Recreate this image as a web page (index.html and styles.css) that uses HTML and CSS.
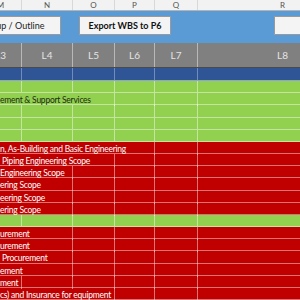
FILE: index.html
```html
<!DOCTYPE html>
<html>
<head>
    <meta charset="utf8"/>
    <link rel="stylesheet" href="styles.css">
</head>
<body>
<div class="sheet">
    <!-- column letters -->
    <div class="row letters">
        <div class="cell">M</div>
        <div class="cell">N</div>
        <div class="cell">O</div>
        <div class="cell">P</div>
        <div class="cell">Q</div>
        <div class="cell">R</div>
    </div>

    <!-- macro buttons -->
    <div class="toolbar">
        <button type="button" class="btn btn-outline">Group / Outline</button>
        <button type="button" class="btn btn-export">Export WBS to P6</button>
        <button type="button" class="btn btn-more"></button>
    </div>

    <div class="row levels">
        <div class="cell">L3</div>
        <div class="cell">L4</div>
        <div class="cell">L5</div>
        <div class="cell">L6</div>
        <div class="cell">L7</div>
        <div class="cell">L8</div>
    </div>

    <div class="row blue">
        <div class="cell"></div><div class="cell"></div><div class="cell"></div>
        <div class="cell"></div><div class="cell"></div><div class="cell"></div>
    </div>

    <div class="row green">
        <div class="cell"></div><div class="cell"></div><div class="cell"></div>
        <div class="cell"></div><div class="cell"></div><div class="cell"></div>
    </div>
    <div class="row green">
        <div class="cell txt span3">ement &amp; Support Services</div>
        <div class="cell"></div><div class="cell"></div><div class="cell"></div>
    </div>
    <div class="row green">
        <div class="cell"></div><div class="cell"></div><div class="cell"></div>
        <div class="cell"></div><div class="cell"></div><div class="cell"></div>
    </div>
    <div class="row green">
        <div class="cell"></div><div class="cell"></div><div class="cell"></div>
        <div class="cell"></div><div class="cell"></div><div class="cell"></div>
    </div>
    <div class="row green">
        <div class="cell"></div><div class="cell"></div><div class="cell"></div>
        <div class="cell"></div><div class="cell"></div><div class="cell"></div>
    </div>

    <div class="row red">
        <div class="cell txt span4">n, As-Building and Basic Engineering</div>
        <div class="cell"></div><div class="cell"></div>
    </div>
    <div class="row red">
        <div class="cell txt span3 indent">Piping Engineering Scope</div>
        <div class="cell"></div><div class="cell"></div><div class="cell"></div>
    </div>
    <div class="row red">
        <div class="cell txt span2">Engineering Scope</div>
        <div class="cell"></div><div class="cell"></div><div class="cell"></div><div class="cell"></div>
    </div>
    <div class="row red">
        <div class="cell txt span2">ering Scope</div>
        <div class="cell"></div><div class="cell"></div><div class="cell"></div><div class="cell"></div>
    </div>
    <div class="row red">
        <div class="cell txt span2">eering Scope</div>
        <div class="cell"></div><div class="cell"></div><div class="cell"></div><div class="cell"></div>
    </div>
    <div class="row red">
        <div class="cell txt span2">ering Scope</div>
        <div class="cell"></div><div class="cell"></div><div class="cell"></div><div class="cell"></div>
    </div>

    <div class="row green">
        <div class="cell"></div><div class="cell"></div><div class="cell"></div>
        <div class="cell"></div><div class="cell"></div><div class="cell"></div>
    </div>

    <div class="row red">
        <div class="cell txt span2">urement</div>
        <div class="cell"></div><div class="cell"></div><div class="cell"></div><div class="cell"></div>
    </div>
    <div class="row red">
        <div class="cell txt span2">urement</div>
        <div class="cell"></div><div class="cell"></div><div class="cell"></div><div class="cell"></div>
    </div>
    <div class="row red">
        <div class="cell txt span2 indent">Procurement</div>
        <div class="cell"></div><div class="cell"></div><div class="cell"></div><div class="cell"></div>
    </div>
    <div class="row red">
        <div class="cell txt span2">ement</div>
        <div class="cell"></div><div class="cell"></div><div class="cell"></div><div class="cell"></div>
    </div>
    <div class="row red">
        <div class="cell txt">ment</div>
        <div class="cell"></div><div class="cell"></div><div class="cell"></div><div class="cell"></div><div class="cell"></div>
    </div>
    <div class="row red">
        <div class="cell txt span3">cs) and Insurance for equipment</div>
        <div class="cell"></div><div class="cell"></div><div class="cell"></div>
    </div>
</div>
</body>
</html>
```

FILE: styles.css
```css
body {
    margin: 0;
    overflow: hidden;
    background: #fff;
    font-family: Lato, "Liberation Sans", sans-serif;
}

/* sheet starts mid column M */
.sheet {
    margin-left: -20px;
    width: 388px;
}

.row {
    display: grid;
    grid-template-columns: 42px 51px 42px 40px 43px 170px;
    box-sizing: border-box;
}

.cell {
    box-sizing: border-box;
    border-right: 1px solid rgba(255, 255, 255, 0.45);
    white-space: nowrap;
}

.span2 { grid-column: span 2; }
.span3 { grid-column: span 3; }
.span4 { grid-column: span 4; }

/* column letters */
.letters {
    height: 11px;
    background: #f2f2f2;
    border-bottom: 1px solid #b4b4b4;
}

.letters .cell {
    border-right: 1px solid #d8d8d8;
    color: #555;
    font-size: 8px;
    line-height: 10px;
    text-align: center;
}

/* button bar */
.toolbar {
    height: 32px;
    box-sizing: border-box;
    background: #5b9bd5;
    display: flex;
    align-items: flex-start;
    padding-top: 5px;
}

.btn {
    height: 19px;
    background: #f4f4f4;
    border: 1px solid #9a9a9a;
    border-radius: 1px;
    padding: 0;
    font-family: Lato, "Liberation Sans", sans-serif;
    font-size: 9px;
    color: #222;
    flex: none;
}

.btn-outline {
    width: 96px;
    margin-left: -15px;
}

.btn-export {
    width: 92px;
    margin-left: 18px;
    font-weight: bold;
    color: #111;
}

.btn-more {
    width: 80px;
    margin-left: 103px;
}

/* level header */
.levels {
    height: 25px;
    background: #808080;
    border-bottom: 1px solid #4a4a4a;
}

.levels .cell {
    border-right: 1px solid #b8b8b8;
    color: #e4e4e4;
    font-size: 10px;
    line-height: 24px;
    text-align: center;
}

.blue {
    height: 13px;
    background: #2f5597;
    border-bottom: 1px solid #8ea6cc;
}

.blue .cell {
    border-right: 1px solid #6f8cbc;
}

.green, .red {
    height: 12.18px;
    border-bottom: 1px solid rgba(255, 255, 255, 0.45);
    font-size: 8.5px;
    letter-spacing: -0.25px;
    line-height: 12px;
}

.green {
    background: #92d050;
    color: #1e2a14;
}

.red {
    background: #c00000;
    color: #fff;
}

.txt {
    padding-left: 20px;
    padding-top: 1px;
}

.indent {
    padding-left: 22px;
}
```
